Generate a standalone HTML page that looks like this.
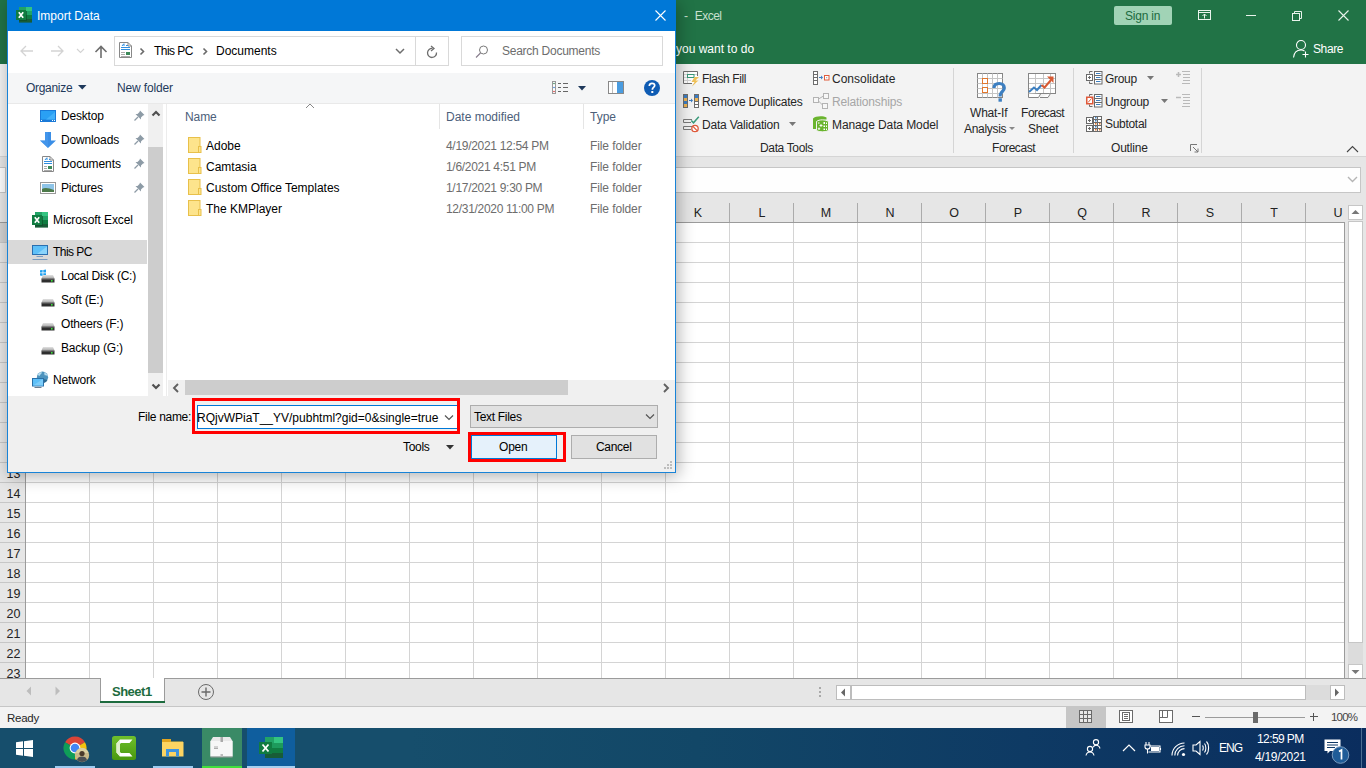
<!DOCTYPE html>
<html><head><meta charset="utf-8">
<style>
*{box-sizing:border-box;margin:0;padding:0}
html,body{width:1366px;height:768px;overflow:hidden;background:#fff;font-family:"Liberation Sans",sans-serif;font-size:12px;color:#000}
.a{position:absolute}
.t{position:absolute;white-space:nowrap;line-height:1}
svg.a{overflow:visible}
.rb{font-size:12px;color:#262626}
.dt{font-size:12px;color:#000}
.ch{position:absolute;top:206px;width:64px;padding-left:2px;text-align:center;font-size:12.5px;color:#222;line-height:14px}
.rh{position:absolute;left:1px;width:25px;text-align:center;font-size:12.5px;color:#222;line-height:22px;height:20px}
#titlebar{left:0;top:0;width:1366px;height:64px;background:#217346}
#ribbon{left:0;top:64px;width:1366px;height:93px;background:#f3f3f3;border-bottom:1px solid #d5d5d5}
#fstrip{left:0;top:157px;width:1366px;height:46px;background:#e6e6e6}
#fbox{left:300px;top:167px;width:1061px;height:26px;background:#fefefe;border:1px solid #c6c6c6}
#colhdr{left:0;top:193px;width:1345px;height:30px;background:#e6e6e6;border-bottom:1px solid #9b9b9b}
#grid{left:25px;top:223px;width:1320px;height:455px;background:#fff;
 background-image:linear-gradient(to right,#d4d4d4 1px,transparent 1px),linear-gradient(to bottom,#d4d4d4 1px,transparent 1px);
 background-size:64px 20px;background-position:0 19px;border-right:1px solid #9b9b9b}
#rowhdr{left:0;top:223px;width:26px;height:455px;background:#e6e6e6;border-right:1px solid #9b9b9b;
 background-image:linear-gradient(to bottom,#c6c6c6 1px,transparent 1px);background-size:20px 20px;background-position:0 19px}
#tabs{left:0;top:678px;width:1366px;height:29px;background:#e6e6e6;border-top:1px solid #9b9b9b;border-bottom:1px solid #c6c6c6}
#status{left:0;top:707px;width:1366px;height:21px;background:#f3f3f3}
#taskbar{left:0;top:728px;width:1366px;height:40px;background:linear-gradient(to right,#164e6c 0%,#164e6c 30%,#124767 51%,#0e3a64 75%,#0a2d5e 100%)}
</style></head><body>
<!-- ===== EXCEL TITLE ===== -->
<div id="titlebar" class="a"></div>
<div class="t" style="left:684px;top:10px;color:#c8e0d0;font-size:12px">-&nbsp;&nbsp;<span style="letter-spacing:-0.5px">Excel</span></div>
<div class="a" style="left:1114px;top:6px;width:58px;height:19px;background:#a1d3b6;border-radius:2px"></div>
<div class="t" style="left:1125px;top:10px;color:#1c6b3f;font-size:12px;letter-spacing:-0.2px">Sign in</div>
<svg class="a" style="left:1196px;top:8px" width="18" height="14" viewBox="0 0 18 14"><g fill="none" stroke="#e9f3ec" stroke-width="1"><rect x="2.5" y="2.5" width="12" height="9"/><line x1="2.5" y1="4.5" x2="14.5" y2="4.5"/><path d="M8.5 10.5V6M6.5 8L8.5 6L10.5 8"/></g></svg>
<div class="a" style="left:1246px;top:15px;width:10px;height:1px;background:#e9f3ec"></div>
<svg class="a" style="left:1290px;top:9px" width="14" height="13" viewBox="0 0 14 13"><g fill="none" stroke="#e9f3ec" stroke-width="1"><rect x="2.5" y="4.5" width="7" height="7"/><path d="M4.5 4.5V2.5H11.5V9.5H9.5"/></g></svg>
<svg class="a" style="left:1337px;top:9px" width="13" height="13" viewBox="0 0 13 13"><path d="M1.5 1.5L11.5 11.5M11.5 1.5L1.5 11.5" stroke="#e9f3ec" stroke-width="1.1"/></svg>
<div class="t" style="left:676px;top:43px;color:#fff;font-size:12px">you want to do</div>
<svg class="a" style="left:1292px;top:39px" width="18" height="19" viewBox="0 0 18 19"><g fill="none" stroke="#fff" stroke-width="1.1"><circle cx="9" cy="6" r="4.5"/><path d="M1.5 18.5C2 13.5 5 11 9 11C10.5 11 11.5 11.3 12.5 12"/><path d="M13.5 12.5V18.5M10.5 15.5H16.5"/></g></svg>
<div class="t" style="left:1313px;top:43px;color:#fff;font-size:12px;letter-spacing:-0.4px">Share</div>

<!-- ===== RIBBON ===== -->
<div id="ribbon" class="a"></div>
<div class="a" style="left:953px;top:68px;width:1px;height:85px;background:#d5d5d5"></div>
<div class="a" style="left:1073px;top:68px;width:1px;height:85px;background:#d5d5d5"></div>
<div class="a" style="left:1201px;top:68px;width:1px;height:85px;background:#d5d5d5"></div>

<!-- flash fill -->
<svg class="a" style="left:683px;top:71px" width="17" height="16" viewBox="0 0 17 16"><rect x="0.5" y="0.5" width="14" height="12" fill="#fff"/><path d="M1 3.5H14M1 6.5H4M1 9.5H8M4.5 1V12" stroke="#d6d6d6"/><path d="M14.5 5V0.5H0.5V12.5H9" fill="none" stroke="#6e6e6e"/><rect x="4.5" y="3.5" width="6.5" height="3" fill="#fff" stroke="#3a9a7a"/><path d="M16 6H11.5L8.5 11H11.5L9 15.5L15.5 9.5H12.5Z" fill="#efc15a"/></svg>
<div class="t rb" style="left:702px;top:73px;letter-spacing:-0.4px">Flash Fill</div>
<!-- remove dup -->
<svg class="a" style="left:683px;top:94px" width="16" height="14" viewBox="0 0 16 14"><rect x="0.5" y="0.5" width="4" height="13" fill="#fff" stroke="#6d6d6d"/><rect x="1" y="1" width="3" height="3" fill="#3b7dc4"/><rect x="1" y="4" width="3" height="3" fill="#efb454"/><rect x="1" y="7" width="3" height="3" fill="#3b7dc4"/><rect x="1" y="10" width="3" height="3" fill="#efb454"/><rect x="11.5" y="0.5" width="4" height="13" fill="#fff" stroke="#6d6d6d"/><rect x="12" y="1" width="3" height="3" fill="#3b7dc4"/><rect x="12" y="4" width="3" height="3" fill="#efb454"/><path d="M12 7.5H15M12 10.5H15" stroke="#6d6d6d"/><path d="M6 6.5H9" stroke="#3b7dc4"/><path d="M8 4.5L10 6.5L8 8.5Z" fill="#3b7dc4"/></svg>
<div class="t rb" style="left:702px;top:96px;letter-spacing:-0.2px">Remove Duplicates</div>
<!-- data validation -->
<svg class="a" style="left:683px;top:116px" width="17" height="16" viewBox="0 0 17 16"><path d="M9 3.5H0.5V6.5H8" fill="none" stroke="#7a7a7a"/><path d="M9 10.5H0.5V13.5H8" fill="none" stroke="#7a7a7a"/><path d="M8.3 4.5L10.5 6.8L15.8 0.8" fill="none" stroke="#3a9a7a" stroke-width="1.5"/><circle cx="12" cy="12.5" r="3.2" fill="#fff" stroke="#e0593a" stroke-width="1.3"/><path d="M9.9 10.4L14.1 14.6" stroke="#e0593a" stroke-width="1.3"/></svg>
<div class="t rb" style="left:702px;top:119px;letter-spacing:-0.2px">Data Validation</div>
<svg class="a" style="left:789px;top:122px" width="8" height="5"><path d="M0 0H7L3.5 4Z" fill="#777"/></svg>
<!-- consolidate -->
<svg class="a" style="left:813px;top:71px" width="17" height="14" viewBox="0 0 17 14"><rect x="0.5" y="0.5" width="4" height="13" fill="#fff" stroke="#6d6d6d"/><path d="M0.5 3.5H4.5M0.5 6.5H4.5M0.5 9.5H4.5" stroke="#6d6d6d"/><path d="M6 6.5H9" stroke="#3b7dc4"/><path d="M8 4.5L10 6.5L8 8.5Z" fill="#3b7dc4"/><rect x="11.5" y="4.5" width="4.5" height="4.5" fill="#fff" stroke="#e05a3a"/><rect x="13.2" y="6.2" width="1" height="1" fill="#888"/></svg>
<div class="t rb" style="left:832px;top:73px">Consolidate</div>
<!-- relationships -->
<svg class="a" style="left:813px;top:93px" width="17" height="16" viewBox="0 0 17 16"><g stroke="#b3b3b3" fill="#f7f7f7"><rect x="0.5" y="4.5" width="5" height="5"/><rect x="10.5" y="0.5" width="5" height="5"/><rect x="9.5" y="10.5" width="5" height="5"/><path d="M5.5 6L10.5 3M5.5 8L9.5 12" fill="none"/></g></svg>
<div class="t rb" style="left:832px;top:96px;color:#a6a6a6;letter-spacing:-0.15px">Relationships</div>
<!-- manage data model -->
<svg class="a" style="left:812px;top:115px" width="18" height="18" viewBox="0 0 18 18"><path d="M1 3.5C3 1 11 0.3 14.5 2.5V4.5L4.5 6V14H1Z" fill="#6ab42e"/><path d="M4.5 6.5C7 4.3 13.5 4.3 16.5 6.5V15.5C14 17.3 7 17.3 4.5 15.5Z" fill="#6ab42e" stroke="#f3f3f3" stroke-width="1"/><g fill="#fff"><rect x="11.5" y="7" width="1.5" height="2"/><rect x="14" y="7.5" width="1" height="1.5"/><rect x="11.5" y="10.5" width="1.5" height="1.5"/><rect x="14" y="10.5" width="1" height="1.5"/><rect x="11.5" y="13.5" width="1.5" height="1.5"/><rect x="14" y="13.5" width="1" height="1.5"/><rect x="6" y="7.5" width="1.5" height="1"/></g><path d="M9 9V12M7.5 10.5H10.5M7 12.5V15M5.8 13.75H8.2" stroke="#fff" stroke-width="0.9"/></svg>
<div class="t rb" style="left:832px;top:119px;letter-spacing:-0.1px">Manage Data Model</div>
<div class="t rb" style="left:760px;top:142px;letter-spacing:-0.35px">Data Tools</div>

<!-- what-if -->
<svg class="a" style="left:976px;top:72px" width="32" height="31" viewBox="0 0 32 31"><rect x="1.5" y="1.5" width="25" height="24" fill="#fff" stroke="#858585"/><g stroke="#c5c5c5"><path d="M6.5 1.5V25.5M11.5 1.5V25.5M16.5 1.5V25.5M21.5 1.5V25.5M1.5 6.5H26.5M1.5 11.5H26.5M1.5 16.5H26.5M1.5 21.5H26.5"/></g><rect x="6.5" y="6.5" width="5" height="5" fill="#fff" stroke="#e1772e"/><rect x="6.5" y="15.5" width="5" height="5" fill="#fff" stroke="#e1772e"/><path d="M18 16C18 12.5 20.5 11.5 23.2 11.5C26.3 11.5 28.3 13.3 28.3 16C28.3 19.3 24.6 19.5 24.2 23V24.5" fill="none" stroke="#3c7fc1" stroke-width="3.2"/><rect x="22.5" y="26.3" width="3.4" height="3.4" fill="#3c7fc1"/></svg>
<div class="t rb" style="left:970px;top:107px;letter-spacing:-0.2px">What-If</div>
<div class="t rb" style="left:964px;top:123px;letter-spacing:-0.3px">Analysis</div>
<svg class="a" style="left:1009px;top:127px" width="7" height="4"><path d="M0 0H6L3 3Z" fill="#888"/></svg>
<!-- forecast sheet -->
<svg class="a" style="left:1027px;top:72px" width="30" height="27" viewBox="0 0 30 27"><rect x="1.5" y="1.5" width="27" height="20" fill="#fff"/><g stroke="#c5c5c5"><path d="M8.5 1.5V21.5M16.5 1.5V21.5M23.5 1.5V21.5M1.5 6.5H28.5M1.5 11.5H28.5M1.5 16.5H28.5"/></g><rect x="1.5" y="1.5" width="27" height="20" fill="none" stroke="#858585"/><path d="M1.5 21.5V25.5H11.5L13.5 22M13 25.5H21L23.5 21.5" fill="#fff" stroke="#858585"/><path d="M2 20L7 15.5L10 18L14.5 13" fill="none" stroke="#3c7fc1" stroke-width="2"/><path d="M14.5 13L17.5 15.5L24 8" fill="none" stroke="#d85a33" stroke-width="2"/><path d="M20 4.5H26.5V11Z" fill="#d85a33"/></svg>
<div class="t rb" style="left:1021px;top:107px;letter-spacing:-0.45px">Forecast</div>
<div class="t rb" style="left:1028px;top:123px;letter-spacing:-0.2px">Sheet</div>
<div class="t rb" style="left:992px;top:142px;letter-spacing:-0.45px">Forecast</div>

<!-- group -->
<svg class="a" style="left:1086px;top:71px" width="17" height="14" viewBox="0 0 17 14"><rect x="8.5" y="0.5" width="7.5" height="12.5" fill="#fff" stroke="#6a6a6a"/><path d="M8.5 4.5H16M8.5 8.5H16" stroke="#6a6a6a"/><path d="M10 2.5H14.5M10 6.5H14.5M10 10.5H14.5" stroke="#3c7fc1"/><path d="M6.5 0.5H3.5V2.5M3.5 10.5V12.5H6.5" fill="none" stroke="#6a6a6a"/><rect x="0.5" y="3.5" width="6" height="6" fill="#fff" stroke="#6a6a6a"/><path d="M2 6.5H5M3.5 5V8" stroke="#6a6a6a"/></svg>
<div class="t rb" style="left:1105px;top:73px;letter-spacing:-0.3px">Group</div>
<svg class="a" style="left:1147px;top:76px" width="8" height="5"><path d="M0 0H7L3.5 4Z" fill="#777"/></svg>
<svg class="a" style="left:1176px;top:71px" width="15" height="14" viewBox="0 0 15 14"><g stroke="#b9b9b9"><path d="M0 3.5H5M2.5 1V6" stroke-width="1.5"/><path d="M6 0.5H14M7 3.5H14M7 6.5H14M7 9.5H14M6 12.5H14"/></g></svg>
<!-- ungroup -->
<svg class="a" style="left:1086px;top:94px" width="17" height="14" viewBox="0 0 17 14"><rect x="8.5" y="0.5" width="7.5" height="12.5" fill="#fff" stroke="#6a6a6a"/><path d="M8.5 4.5H16M8.5 8.5H16" stroke="#6a6a6a"/><path d="M10 2.5H14.5M10 6.5H14.5M10 10.5H14.5" stroke="#3c7fc1"/><path d="M6.5 0.5H3.5V2.5M3.5 10.5V12.5H6.5" fill="none" stroke="#6a6a6a"/><rect x="0.75" y="3.25" width="6" height="6.5" fill="#fff" stroke="#e0593a" stroke-width="1.5"/><path d="M2 8.5L5.5 4.5" stroke="#e0593a" stroke-width="1"/></svg>
<div class="t rb" style="left:1105px;top:96px;letter-spacing:-0.3px">Ungroup</div>
<svg class="a" style="left:1161px;top:99px" width="8" height="5"><path d="M0 0H7L3.5 4Z" fill="#777"/></svg>
<svg class="a" style="left:1176px;top:94px" width="15" height="14" viewBox="0 0 15 14"><g stroke="#b9b9b9"><path d="M0 3.5H5" stroke-width="1.5"/><path d="M6 0.5H14M7 3.5H14M7 6.5H14M7 9.5H14M6 12.5H14"/></g></svg>
<!-- subtotal -->
<svg class="a" style="left:1086px;top:116px" width="17" height="16" viewBox="0 0 17 16"><g fill="#fff" stroke="#6a6a6a"><rect x="0.5" y="1.5" width="6" height="6"/><rect x="0.5" y="9.5" width="6" height="6"/><rect x="7.5" y="0.5" width="8" height="15"/></g><path d="M2 4.5H5M3.5 3V6M2 12.5H5M3.5 11V14M11.5 0.5V15.5M7.5 3.5H15.5M7.5 6.5H15.5M7.5 9.5H15.5M7.5 12.5H15.5" stroke="#6a6a6a"/><g fill="#3c7fc1"><rect x="9" y="1" width="1.5" height="1.5"/><rect x="9" y="4" width="1.5" height="1.5"/><rect x="9" y="10" width="1.5" height="1.5"/></g><g fill="#e1772e"><rect x="9" y="7" width="1.5" height="1.5"/><rect x="13" y="7" width="1.5" height="1.5"/><rect x="9" y="13" width="1.5" height="1.5"/><rect x="13" y="13" width="1.5" height="1.5"/></g></svg>
<div class="t rb" style="left:1105px;top:118px;letter-spacing:-0.3px">Subtotal</div>
<div class="t rb" style="left:1111px;top:142px;letter-spacing:-0.2px">Outline</div>
<svg class="a" style="left:1190px;top:144px" width="9" height="9" viewBox="0 0 9 9"><g fill="none" stroke="#777"><path d="M0.5 7V0.5H7"/><path d="M3 3L8 8M8 4.5V8H4.5"/></g></svg>
<svg class="a" style="left:1346px;top:145px" width="13" height="8" viewBox="0 0 13 8"><path d="M1 7L6.5 1.5L12 7" fill="none" stroke="#444" stroke-width="1.1"/></svg>

<!-- ===== FORMULA BAR ===== -->
<div id="fstrip" class="a"></div>
<div id="fbox" class="a"></div>
<svg class="a" style="left:1347px;top:176px" width="11" height="7" viewBox="0 0 11 7"><path d="M1 1L5.5 5.5L10 1" fill="none" stroke="#b5b5b5" stroke-width="1.4"/></svg>

<!-- ===== HEADERS & GRID ===== -->
<div id="colhdr" class="a"></div>
<div id="grid" class="a"></div>
<div id="rowhdr" class="a"></div>
<div class="a" style="left:0;top:223px;width:25px;height:19px;background:#d2d2d2"></div>
<div class="a" style="left:-100px;top:167px;width:106px;height:26px;border:1px solid #c6c6c6;background:#fefefe"></div>
<div class="ch" style="left:25px">A</div>
<div class="ch" style="left:89px">B</div>
<div class="a" style="left:89px;top:203px;width:1px;height:19px;background:#ababab"></div>
<div class="ch" style="left:153px">C</div>
<div class="a" style="left:153px;top:203px;width:1px;height:19px;background:#ababab"></div>
<div class="ch" style="left:217px">D</div>
<div class="a" style="left:217px;top:203px;width:1px;height:19px;background:#ababab"></div>
<div class="ch" style="left:281px">E</div>
<div class="a" style="left:281px;top:203px;width:1px;height:19px;background:#ababab"></div>
<div class="ch" style="left:345px">F</div>
<div class="a" style="left:345px;top:203px;width:1px;height:19px;background:#ababab"></div>
<div class="ch" style="left:409px">G</div>
<div class="a" style="left:409px;top:203px;width:1px;height:19px;background:#ababab"></div>
<div class="ch" style="left:473px">H</div>
<div class="a" style="left:473px;top:203px;width:1px;height:19px;background:#ababab"></div>
<div class="ch" style="left:537px">I</div>
<div class="a" style="left:537px;top:203px;width:1px;height:19px;background:#ababab"></div>
<div class="ch" style="left:601px">J</div>
<div class="a" style="left:601px;top:203px;width:1px;height:19px;background:#ababab"></div>
<div class="ch" style="left:665px">K</div>
<div class="a" style="left:665px;top:203px;width:1px;height:19px;background:#ababab"></div>
<div class="ch" style="left:729px">L</div>
<div class="a" style="left:729px;top:203px;width:1px;height:19px;background:#ababab"></div>
<div class="ch" style="left:793px">M</div>
<div class="a" style="left:793px;top:203px;width:1px;height:19px;background:#ababab"></div>
<div class="ch" style="left:857px">N</div>
<div class="a" style="left:857px;top:203px;width:1px;height:19px;background:#ababab"></div>
<div class="ch" style="left:921px">O</div>
<div class="a" style="left:921px;top:203px;width:1px;height:19px;background:#ababab"></div>
<div class="ch" style="left:985px">P</div>
<div class="a" style="left:985px;top:203px;width:1px;height:19px;background:#ababab"></div>
<div class="ch" style="left:1049px">Q</div>
<div class="a" style="left:1049px;top:203px;width:1px;height:19px;background:#ababab"></div>
<div class="ch" style="left:1113px">R</div>
<div class="a" style="left:1113px;top:203px;width:1px;height:19px;background:#ababab"></div>
<div class="ch" style="left:1177px">S</div>
<div class="a" style="left:1177px;top:203px;width:1px;height:19px;background:#ababab"></div>
<div class="ch" style="left:1241px">T</div>
<div class="a" style="left:1241px;top:203px;width:1px;height:19px;background:#ababab"></div>
<div class="ch" style="left:1305px">U</div>
<div class="a" style="left:1305px;top:203px;width:1px;height:19px;background:#ababab"></div>
<div class="rh" style="top:223px">1</div>
<div class="rh" style="top:243px">2</div>
<div class="rh" style="top:263px">3</div>
<div class="rh" style="top:283px">4</div>
<div class="rh" style="top:303px">5</div>
<div class="rh" style="top:323px">6</div>
<div class="rh" style="top:343px">7</div>
<div class="rh" style="top:363px">8</div>
<div class="rh" style="top:383px">9</div>
<div class="rh" style="top:403px">10</div>
<div class="rh" style="top:423px">11</div>
<div class="rh" style="top:443px">12</div>
<div class="rh" style="top:463px">13</div>
<div class="rh" style="top:483px">14</div>
<div class="rh" style="top:503px">15</div>
<div class="rh" style="top:523px">16</div>
<div class="rh" style="top:543px">17</div>
<div class="rh" style="top:563px">18</div>
<div class="rh" style="top:583px">19</div>
<div class="rh" style="top:603px">20</div>
<div class="rh" style="top:623px">21</div>
<div class="rh" style="top:643px">22</div>
<div class="rh" style="top:663px">23</div>
<!-- vertical scrollbar -->
<div class="a" style="left:1345px;top:203px;width:21px;height:475px;background:#e6e6e6"></div>
<div class="a" style="left:1348px;top:205px;width:15px;height:15px;background:#fff;border:1px solid #c6c6c6"></div>
<svg class="a" style="left:1351px;top:209px" width="9" height="6"><path d="M0.5 5H8.5L4.5 1Z" fill="#777"/></svg>
<div class="a" style="left:1348px;top:221px;width:15px;height:422px;background:#fff;border:1px solid #c6c6c6"></div>
<div class="a" style="left:1348px;top:643px;width:15px;height:21px;background:#dcdcdc"></div>
<div class="a" style="left:1348px;top:664px;width:15px;height:15px;background:#fff;border:1px solid #c6c6c6"></div>
<svg class="a" style="left:1351px;top:669px" width="9" height="6"><path d="M0.5 1H8.5L4.5 5Z" fill="#777"/></svg>

<!-- ===== SHEET TABS ===== -->
<div id="tabs" class="a"></div>
<svg class="a" style="left:26px;top:686px" width="6" height="10"><path d="M5 0.5V9.5L0.5 5Z" fill="#bdbdbd"/></svg>
<svg class="a" style="left:55px;top:686px" width="6" height="10"><path d="M0.5 0.5V9.5L5 5Z" fill="#bdbdbd"/></svg>
<div class="a" style="left:100px;top:678px;width:65px;height:25px;background:#fff;border-left:1px solid #9b9b9b;border-right:1px solid #9b9b9b"></div>
<div class="a" style="left:100px;top:701px;width:65px;height:2px;background:#1d6b3e"></div>
<div class="t" style="left:112px;top:685px;font-weight:bold;color:#1d6b3e;font-size:13px;letter-spacing:-0.5px">Sheet1</div>
<svg class="a" style="left:197px;top:683px" width="18" height="18" viewBox="0 0 18 18"><circle cx="9" cy="9" r="7.5" fill="none" stroke="#6a6a6a" stroke-width="1"/><path d="M9 4.5V13.5M4.5 9H13.5" stroke="#6a6a6a" stroke-width="1.4"/></svg>
<div class="a" style="left:819px;top:687px;width:2px;height:2px;background:#a9a9a9"></div>
<div class="a" style="left:819px;top:691px;width:2px;height:2px;background:#a9a9a9"></div>
<div class="a" style="left:819px;top:695px;width:2px;height:2px;background:#a9a9a9"></div>
<div class="a" style="left:836px;top:685px;width:15px;height:15px;background:#fff;border:1px solid #bdbdbd"></div>
<svg class="a" style="left:840px;top:688px" width="6" height="9"><path d="M5 0.5V8.5L1 4.5Z" fill="#666"/></svg>
<div class="a" style="left:851px;top:685px;width:455px;height:15px;background:#fff;border:1px solid #bdbdbd"></div>
<div class="a" style="left:1306px;top:685px;width:24px;height:15px;background:#dcdcdc"></div>
<div class="a" style="left:1330px;top:685px;width:15px;height:15px;background:#fff;border:1px solid #bdbdbd"></div>
<svg class="a" style="left:1334px;top:688px" width="6" height="9"><path d="M1 0.5V8.5L5 4.5Z" fill="#666"/></svg>

<!-- ===== STATUS ===== -->
<div id="status" class="a"></div>
<div class="t" style="left:7px;top:713px;color:#262626;font-size:11.5px;letter-spacing:-0.25px">Ready</div>
<div class="a" style="left:1066px;top:707px;width:40px;height:21px;background:#c6c6c6"></div>
<svg class="a" style="left:1079px;top:710px" width="14" height="14" viewBox="0 0 14 14"><rect x="0.5" y="0.5" width="12" height="12" fill="#e8e8e8" stroke="#6a6a6a"/><path d="M4.5 0.5V12.5M8.5 0.5V12.5M0.5 4.5H12.5M0.5 8.5H12.5" stroke="#6a6a6a"/></svg>
<svg class="a" style="left:1119px;top:710px" width="15" height="14" viewBox="0 0 15 14"><rect x="0.5" y="0.5" width="13" height="12" fill="#fff" stroke="#6a6a6a"/><rect x="3.5" y="2.5" width="7" height="8" fill="#fff" stroke="#6a6a6a"/><path d="M5 4.5H9M5 6.5H9M5 8.5H9" stroke="#6a6a6a"/></svg>
<svg class="a" style="left:1159px;top:710px" width="15" height="14" viewBox="0 0 15 14"><rect x="0.5" y="0.5" width="13" height="12" fill="#fff" stroke="#6a6a6a"/><path d="M3.5 0.5V7.5M8.5 0.5V7.5H0.5" fill="none" stroke="#6a6a6a"/></svg>
<div class="a" style="left:1192px;top:716px;width:8px;height:1px;background:#555"></div>
<div class="a" style="left:1205px;top:717px;width:100px;height:1px;background:#9b9b9b"></div>
<div class="a" style="left:1253px;top:712px;width:5px;height:11px;background:#6a6a6a"></div>
<div class="a" style="left:1310px;top:716px;width:8px;height:1px;background:#555"></div>
<div class="a" style="left:1313px;top:713px;width:1px;height:8px;background:#555"></div>
<div class="t" style="left:1331px;top:712px;color:#444;font-size:11.5px;letter-spacing:-0.8px">100%</div>
<!-- ===== TASKBAR ===== -->
<div id="taskbar" class="a"></div>
<svg class="a" style="left:16px;top:740px" width="17" height="17" viewBox="0 0 17 17"><path d="M0 2.3L7 1.3V8H0ZM8 1.2L17 0V8H8ZM0 9H7V15.7L0 14.7ZM8 9H17V17L8 15.8Z" fill="#fff"/></svg>
<svg class="a" style="left:63px;top:736px" width="28" height="27" viewBox="0 0 28 27"><path d="M12 12L2.04 6.25A11.5 11.5 0 0 1 21.96 6.25Z" fill="#db4437"/><path d="M12 12L21.96 6.25A11.5 11.5 0 0 1 12 23.5Z" fill="#f4c20d"/><path d="M12 12L12 23.5A11.5 11.5 0 0 1 2.04 6.25Z" fill="#0f9d58"/><circle cx="12" cy="12" r="5.4" fill="#fff"/><circle cx="12" cy="12" r="4.3" fill="#4285f4"/><circle cx="19" cy="19" r="7.2" fill="#c9b98a"/><path d="M13 17C14 13 17 12 19 12C22 12 25 14 25.5 17" fill="#e8e0b0" opacity=".6"/><circle cx="19" cy="17.5" r="2.6" fill="#4a3a2c"/><path d="M14 24C14.5 21.5 16.5 20.5 19 20.5C21.5 20.5 23.5 21.5 24 24A7.2 7.2 0 0 1 14 24Z" fill="#4a4f55"/></svg>
<div class="a" style="left:55px;top:766px;width:40px;height:2px;background:#9ccbf0"></div>
<svg class="a" style="left:112px;top:736px" width="24" height="24" viewBox="0 0 24 24"><defs><linearGradient id="cg" x1="0" y1="0" x2="0" y2="1"><stop offset="0" stop-color="#6fbf2c"/><stop offset="1" stop-color="#48980e"/></linearGradient></defs><rect x="0" y="0" width="24" height="24" rx="2.5" fill="url(#cg)"/><path d="M20.5 3.5H8L4.5 7.5V16.5L8 20.5H20.5L17.5 17H9L8 16V8L9 7H17.5Z" fill="#fff"/><path d="M4.5 7.5L8 3.5V20.5L4.5 16.5Z" fill="#dff0cc"/></svg>
<svg class="a" style="left:162px;top:739px" width="22" height="18" viewBox="0 0 22 18"><path d="M0 1H8L9 2.5H21V17H0Z" fill="#f1c33b"/><rect x="0" y="0" width="9" height="3" fill="#e2a520"/><rect x="0" y="3" width="21.5" height="14.5" fill="#fcd462"/><path d="M4 17.5V10H17V17.5H14V13H7V17.5Z" fill="#3e94e0"/></svg>
<div class="a" style="left:153px;top:766px;width:40px;height:2px;background:#9ccbf0"></div>
<div class="a" style="left:202px;top:728px;width:40px;height:40px;background:#3a8a66"></div>
<div class="a" style="left:202px;top:766px;width:40px;height:2px;background:#43e03c"></div>
<svg class="a" style="left:210px;top:736px" width="23" height="22" viewBox="0 0 23 22"><path d="M3 1H20L22.5 5V20.5H0.5V5Z" fill="#e9e9e9"/><path d="M0.5 5H22.5V20.5H0.5Z" fill="#f7f7f7"/><path d="M0.5 20.5H22.5V21.5H0.5Z" fill="#9a9a9a"/><rect x="10.5" y="1" width="2.5" height="5" fill="#aaa"/><rect x="10.5" y="18" width="2.5" height="3" fill="#bbb"/><path d="M4 11H8M4 12.5H8" stroke="#999" stroke-width="0.8"/></svg>
<div class="a" style="left:247px;top:728px;width:48px;height:40px;background:#0f5e9e"></div>
<div class="a" style="left:247px;top:766px;width:48px;height:2px;background:#a6d0f0"></div>
<svg class="a" style="left:259px;top:737px" width="25" height="22" viewBox="0 0 25 22"><rect x="6" y="0" width="18" height="21" fill="#21a366"/><rect x="15" y="0" width="9" height="6" fill="#33c481"/><rect x="6" y="6" width="18" height="8" fill="#1d9a5c"/><rect x="6" y="11" width="18" height="10" fill="#185c37"/><rect x="6" y="11" width="18" height="5" fill="#107c41"/><rect x="0" y="5" width="13" height="12" fill="#107c41"/><path d="M3.5 7.5L9.5 14.5M9.5 7.5L3.5 14.5" stroke="#fff" stroke-width="1.8"/></svg>
<div class="a" style="left:247px;top:766px;width:48px;height:2px;background:#a6d0f0"></div>

<!-- tray -->
<svg class="a" style="left:1085px;top:739px" width="17" height="18" viewBox="0 0 17 18"><g fill="none" stroke="#fff" stroke-width="1.1"><circle cx="11" cy="3.2" r="2.6"/><path d="M8.2 8.2C8.8 6.8 9.8 6.2 11 6.2C13 6.2 14.5 7.5 15 9.5"/><circle cx="5" cy="10" r="2.6"/><path d="M1 16.5C1.5 14 3 13 5 13C7 13 8.5 14 9 16.5"/></g></svg>
<svg class="a" style="left:1122px;top:744px" width="14" height="8" viewBox="0 0 14 8"><path d="M1 7L7 1L13 7" fill="none" stroke="#fff" stroke-width="1.2"/></svg>
<svg class="a" style="left:1144px;top:741px" width="18" height="13" viewBox="0 0 18 13"><g fill="none" stroke="#fff" stroke-width="1.1"><path d="M2 1V4M5 1V4M1 4H6V6C6 7.5 5 8 3.5 8C2 8 1 7.5 1 6Z"/><path d="M3.5 8V12.5"/><path d="M6 5H16V11H4.5"/><path d="M16.5 7V9"/></g><rect x="7" y="6" width="8" height="4" fill="#fff"/></svg>
<svg class="a" style="left:1171px;top:742px" width="15" height="14" viewBox="0 0 15 14"><g fill="none" stroke="#fff" stroke-width="1.1"><path d="M1 13.5A12.5 12.5 0 0 1 13.5 1"/><path d="M3.8 13.5A9.7 9.7 0 0 1 13.5 3.8"/><path d="M6.6 13.5A6.9 6.9 0 0 1 13.5 6.6"/></g><circle cx="12.5" cy="12.5" r="1.6" fill="#fff"/></svg>
<svg class="a" style="left:1192px;top:740px" width="18" height="16" viewBox="0 0 18 16"><g fill="none" stroke="#fff" stroke-width="1.1"><path d="M1 5H4L8 1.5V14.5L4 11H1Z"/><path d="M10.5 5.5C11.5 6.5 11.5 9.5 10.5 10.5"/><path d="M12.5 3.5C14.3 5.5 14.3 10.5 12.5 12.5"/><path d="M14.5 1.5C17.3 4.5 17.3 11.5 14.5 14.5"/></g></svg>
<div class="t" style="left:1219px;top:742px;color:#fff;font-size:12px;letter-spacing:-0.9px">ENG</div>
<div class="t" style="left:1257px;top:733px;color:#fff;font-size:12px;letter-spacing:-0.6px">12:59 PM</div>
<div class="t" style="left:1255px;top:751px;color:#fff;font-size:12px;letter-spacing:-0.3px">4/19/2021</div>
<svg class="a" style="left:1324px;top:739px" width="26" height="26" viewBox="0 0 26 26"><path d="M0.5 0.5H16.5V12H6L3.5 14.5V12H0.5Z" fill="#fff"/><path d="M3 3.5H14M3 6H14M3 8.5H11" stroke="#123a66" stroke-width="1"/><circle cx="16.5" cy="16" r="8.3" fill="#1f5c98" stroke="#7a9cc0" stroke-width="1"/><path d="M15 12.5L17.5 11V20.5" fill="none" stroke="#fff" stroke-width="1.7"/></svg>
<div class="a" style="left:1361px;top:728px;width:1px;height:40px;background:#4a6e92"></div>
<!-- ===== DIALOG ===== -->
<div class="a" style="left:7px;top:0;width:669px;height:473px;box-shadow:2px 3px 16px rgba(0,0,0,.32)"></div>
<div class="a" style="left:7px;top:0;width:669px;height:473px;background:#fff;border:1px solid #1883d7;border-top:0"></div>
<div class="a" style="left:7px;top:0;width:669px;height:31px;background:#0078d7"></div>
<svg class="a" style="left:16px;top:7px" width="17" height="16" viewBox="0 0 17 16"><rect x="3" y="0" width="13" height="4" fill="#21a366"/><rect x="10" y="0" width="6" height="4" fill="#33c481"/><rect x="3" y="4" width="13" height="4" fill="#21a366"/><rect x="3" y="8" width="13" height="4" fill="#107c41"/><rect x="3" y="12" width="13" height="3.6" fill="#185c37"/><rect x="0" y="3" width="10" height="10" fill="#107c41"/><path d="M10 4V13H3V14H11V4Z" fill="#0b4a26" opacity=".6"/><path d="M2.8 5.2L7.2 10.8M7.2 5.2L2.8 10.8" stroke="#fff" stroke-width="1.7"/></svg>
<div class="t" style="left:37px;top:10px;color:#fff;font-size:12px">Import Data</div>
<svg class="a" style="left:655px;top:10px" width="11" height="11" viewBox="0 0 11 11"><path d="M0.5 0.5L10.5 10.5M10.5 0.5L0.5 10.5" stroke="#fff" stroke-width="1.1"/></svg>

<!-- nav -->
<svg class="a" style="left:20px;top:45px" width="14" height="12" viewBox="0 0 14 12"><path d="M1 6H13M6 1L1 6L6 11" fill="none" stroke="#d3d3d3" stroke-width="1.3"/></svg>
<svg class="a" style="left:50px;top:45px" width="14" height="12" viewBox="0 0 14 12"><path d="M1 6H13M8 1L13 6L8 11" fill="none" stroke="#d3d3d3" stroke-width="1.3"/></svg>
<svg class="a" style="left:76px;top:48px" width="9" height="6" viewBox="0 0 9 6"><path d="M1 1L4.5 4.5L8 1" fill="none" stroke="#d3d3d3" stroke-width="1.1"/></svg>
<svg class="a" style="left:94px;top:45px" width="14" height="14" viewBox="0 0 14 14"><path d="M7 13V1.5M1.5 7L7 1.5L12.5 7" fill="none" stroke="#6e6e6e" stroke-width="1.6"/></svg>
<div class="a" style="left:114px;top:36px;width:335px;height:30px;border:1px solid #d9d9d9;background:#fff"></div>
<div class="a" style="left:415px;top:37px;width:1px;height:28px;background:#d9d9d9"></div>
<svg class="a" style="left:119px;top:42px" width="13" height="16" viewBox="0 0 13 16"><path d="M0.5 0.5H9L12.5 4V15.5H0.5Z" fill="#fff" stroke="#888"/><path d="M9 0.5V4H12.5" fill="none" stroke="#888"/><path d="M2 5.5H11M2 7.5H11" stroke="#2f8ee0"/><path d="M3 4L5 1.5M4 3H6M7 3.5H9" stroke="#2f8ee0"/><path d="M2 10.5H6M2 12.5H6M2 14.5H11" stroke="#aaa"/><rect x="7" y="10" width="4" height="3" fill="#3d8a5a"/></svg>
<svg class="a" style="left:139px;top:47px" width="6" height="9" viewBox="0 0 6 9"><path d="M1.5 1.5L4.5 4.5L1.5 7.5" fill="none" stroke="#6a6a6a" stroke-width="1.6"/></svg>
<div class="t dt" style="left:154px;top:45px;letter-spacing:-0.55px">This PC</div>
<svg class="a" style="left:202px;top:47px" width="6" height="9" viewBox="0 0 6 9"><path d="M1.5 1.5L4.5 4.5L1.5 7.5" fill="none" stroke="#6a6a6a" stroke-width="1.6"/></svg>
<div class="t dt" style="left:216px;top:45px">Documents</div>
<svg class="a" style="left:395px;top:48px" width="10" height="7" viewBox="0 0 10 7"><path d="M1 1L5 5L9 1" fill="none" stroke="#6e6e6e" stroke-width="1.5"/></svg>
<svg class="a" style="left:426px;top:45px" width="13" height="14" viewBox="0 0 13 14"><path d="M10.5 7.5A4.5 4.5 0 1 1 6.5 3.5" fill="none" stroke="#6e6e6e" stroke-width="1.3"/><path d="M5 1L8 3.5L5 6" fill="none" stroke="#6e6e6e" stroke-width="1.3"/></svg>
<div class="a" style="left:461px;top:36px;width:202px;height:30px;border:1px solid #d9d9d9;background:#fff"></div>
<svg class="a" style="left:475px;top:45px" width="14" height="13" viewBox="0 0 14 13"><circle cx="8.5" cy="5" r="4" fill="none" stroke="#7a7a7a" stroke-width="1"/><path d="M5.5 8L1 12.5" stroke="#857a8a" stroke-width="1.1"/></svg>
<div class="t dt" style="left:502px;top:45px;color:#6d6d6d;letter-spacing:-0.25px">Search Documents</div>

<!-- toolbar -->
<div class="a" style="left:8px;top:73px;width:667px;height:31px;background:#f5f6f7;border-bottom:1px solid #e9e9e9"></div>
<div class="t dt" style="left:26px;top:82px;color:#1e395b;letter-spacing:-0.3px">Organize</div>
<svg class="a" style="left:78px;top:85px" width="9" height="5"><path d="M0 0H8.5L4.25 4.5Z" fill="#1e395b"/></svg>
<div class="t dt" style="left:117px;top:82px;color:#1e395b;letter-spacing:-0.15px">New folder</div>
<svg class="a" style="left:552px;top:81px" width="18" height="13" viewBox="0 0 18 13"><rect x="0.5" y="0.5" width="3" height="12" fill="#fff" stroke="#999"/><circle cx="2" cy="2.5" r="0.8" fill="#3a8a5a"/><circle cx="2" cy="6.5" r="0.8" fill="#3a7dd0"/><circle cx="2" cy="10.5" r="0.8" fill="#d83a3a"/><path d="M6 2.5H9M11 2.5H16M6 6.5H9M11 6.5H16M6 10.5H9M11 10.5H16" stroke="#666" stroke-width="1"/></svg>
<svg class="a" style="left:578px;top:86px" width="9" height="5"><path d="M0 0H8L4 4.5Z" fill="#1e395b"/></svg>
<svg class="a" style="left:608px;top:81px" width="17" height="13" viewBox="0 0 17 13"><rect x="0.5" y="0.5" width="15" height="12" fill="#fff" stroke="#888"/><path d="M4.5 1V12" stroke="#bbb"/><rect x="9" y="1" width="6" height="11" fill="#4a9ce0"/></svg>
<svg class="a" style="left:643px;top:79px" width="18" height="18" viewBox="0 0 18 18"><circle cx="9" cy="9" r="8" fill="#0f5cb4"/><path d="M6.3 7C6.3 5.2 7.5 4.3 9 4.3C10.6 4.3 11.7 5.2 11.7 6.6C11.7 8.3 9.4 8.6 9.4 10.3V10.8" fill="none" stroke="#fff" stroke-width="1.7"/><rect x="8.3" y="12" width="2" height="2" fill="#fff"/></svg>

<!-- nav pane -->
<div class="a" style="left:8px;top:240px;width:139px;height:24px;background:#d9d9d9"></div>
<svg class="a" style="left:40px;top:110px" width="16" height="12" viewBox="0 0 16 12"><rect x="0" y="0" width="16" height="12" fill="#1a7ad8"/><rect x="1" y="1" width="14" height="8.5" fill="#2aa0f4"/><path d="M6 9.5L15 2V9.5Z" fill="#43b1fa"/><rect x="1" y="10" width="1" height="1" fill="#fff"/><rect x="12" y="10" width="1" height="1" fill="#fff"/><rect x="14" y="10" width="1" height="1" fill="#fff"/></svg>
<div class="t dt" style="left:61px;top:110px;letter-spacing:-0.2px">Desktop</div>
<svg class="a" style="left:40px;top:132px" width="16" height="16" viewBox="0 0 16 16"><path d="M5 0H11V8.5H16L8 16L0 8.5H5Z" fill="#3a8ee6"/><path d="M5 0H8V16L0 8.5H5Z" fill="#4a9cf0" opacity=".5"/></svg>
<div class="t dt" style="left:61px;top:134px;letter-spacing:-0.15px">Downloads</div>
<svg class="a" style="left:42px;top:156px" width="12" height="16" viewBox="0 0 12 16"><path d="M0.5 0.5H8L11.5 4V15.5H0.5Z" fill="#fff" stroke="#888"/><path d="M8 0.5V4H11.5" fill="none" stroke="#888"/><path d="M2 5.5H10M2 7.5H10" stroke="#2f8ee0"/><path d="M3 4L5 1.5M4 3H6M7 3.5H8" stroke="#2f8ee0"/><path d="M2 10.5H5M2 12.5H5M2 14.5H10" stroke="#aaa"/><rect x="6" y="10" width="4" height="3" fill="#3d8a5a"/></svg>
<div class="t dt" style="left:61px;top:158px;letter-spacing:-0.1px">Documents</div>
<svg class="a" style="left:40px;top:182px" width="16" height="12" viewBox="0 0 16 12"><rect x="0.5" y="0.5" width="15" height="11" fill="#fff" stroke="#999"/><rect x="2" y="2" width="12" height="8" fill="#8ec4e8"/><path d="M2 7C5 5 9 6 14 8V10H2Z" fill="#4d7a4a"/></svg>
<div class="t dt" style="left:61px;top:182px;letter-spacing:-0.2px">Pictures</div>
<svg class="a pin" style="left:134px;top:110px" width="11" height="11" viewBox="0 0 11 11"><path d="M6 0.5L10.5 5L9 5.5L7 7.5L7 9.5L1.5 4L3.5 4L5.5 2Z" fill="#8d9ba6"/><path d="M4 7L0.5 10.5" stroke="#8d9ba6" stroke-width="1.3"/></svg>
<svg class="a pin" style="left:134px;top:134px" width="11" height="11" viewBox="0 0 11 11"><path d="M6 0.5L10.5 5L9 5.5L7 7.5L7 9.5L1.5 4L3.5 4L5.5 2Z" fill="#8d9ba6"/><path d="M4 7L0.5 10.5" stroke="#8d9ba6" stroke-width="1.3"/></svg>
<svg class="a pin" style="left:134px;top:158px" width="11" height="11" viewBox="0 0 11 11"><path d="M6 0.5L10.5 5L9 5.5L7 7.5L7 9.5L1.5 4L3.5 4L5.5 2Z" fill="#8d9ba6"/><path d="M4 7L0.5 10.5" stroke="#8d9ba6" stroke-width="1.3"/></svg>
<svg class="a pin" style="left:134px;top:182px" width="11" height="11" viewBox="0 0 11 11"><path d="M6 0.5L10.5 5L9 5.5L7 7.5L7 9.5L1.5 4L3.5 4L5.5 2Z" fill="#8d9ba6"/><path d="M4 7L0.5 10.5" stroke="#8d9ba6" stroke-width="1.3"/></svg>
<svg class="a" style="left:32px;top:212px" width="17" height="16" viewBox="0 0 17 16"><rect x="3" y="0" width="13" height="4" fill="#21a366"/><rect x="10" y="0" width="6" height="4" fill="#33c481"/><rect x="3" y="4" width="13" height="4" fill="#21a366"/><rect x="3" y="8" width="13" height="4" fill="#107c41"/><rect x="3" y="12" width="13" height="3.6" fill="#185c37"/><rect x="0" y="3" width="10" height="10" fill="#107c41"/><path d="M10 4V13H3V14H11V4Z" fill="#0b4a26" opacity=".6"/><path d="M2.8 5.2L7.2 10.8M7.2 5.2L2.8 10.8" stroke="#fff" stroke-width="1.7"/></svg>
<div class="t dt" style="left:53px;top:214px;letter-spacing:-0.1px">Microsoft Excel</div>
<svg class="a" style="left:32px;top:245px" width="17" height="16" viewBox="0 0 17 16"><rect x="0.5" y="0.5" width="15" height="9" fill="#5ec0f8" stroke="#2a6fb0"/><path d="M5 9L15 1.5V9Z" fill="#8ad4fb"/><path d="M4.5 11.5H11" stroke="#7a9cc0"/><path d="M0.5 14.5H15.5" stroke="#7a9cc0"/></svg>
<div class="t dt" style="left:53px;top:246px;letter-spacing:-0.55px">This PC</div>
<svg class="a" style="left:39px;top:269px" width="8" height="8" viewBox="0 0 8 8"><path d="M1 1.3L3.6 1V3.6H1ZM4.3 0.9L7 0.5V3.6H4.3ZM1 4.3H3.6V6.9L1 6.6ZM4.3 4.3H7V7.4L4.3 7Z" fill="#1ea0f0"/></svg><svg class="a drv" style="left:41px;top:275px" width="14" height="8" viewBox="0 0 14 8"><defs><linearGradient id="dg275" x1="0" y1="0" x2="0" y2="1"><stop offset="0" stop-color="#e2e2e2"/><stop offset="1" stop-color="#a8a8a8"/></linearGradient></defs><path d="M2 0H12L13.5 3.5H0.5Z" fill="url(#dg275)"/><rect x="0.5" y="3.5" width="13" height="4" fill="#2e2e2e"/><rect x="1" y="4" width="12" height="1" fill="#505050"/><rect x="10" y="5" width="1.6" height="1.6" fill="#3ade3a"/></svg>
<div class="t dt" style="left:61px;top:270px;letter-spacing:-0.25px">Local Disk (C:)</div>
<svg class="a drv" style="left:41px;top:299px" width="14" height="8" viewBox="0 0 14 8"><defs><linearGradient id="dg299" x1="0" y1="0" x2="0" y2="1"><stop offset="0" stop-color="#e2e2e2"/><stop offset="1" stop-color="#a8a8a8"/></linearGradient></defs><path d="M2 0H12L13.5 3.5H0.5Z" fill="url(#dg299)"/><rect x="0.5" y="3.5" width="13" height="4" fill="#2e2e2e"/><rect x="1" y="4" width="12" height="1" fill="#505050"/><rect x="10" y="5" width="1.6" height="1.6" fill="#3ade3a"/></svg>
<div class="t dt" style="left:61px;top:294px;letter-spacing:-0.2px">Soft (E:)</div>
<svg class="a drv" style="left:41px;top:323px" width="14" height="8" viewBox="0 0 14 8"><defs><linearGradient id="dg323" x1="0" y1="0" x2="0" y2="1"><stop offset="0" stop-color="#e2e2e2"/><stop offset="1" stop-color="#a8a8a8"/></linearGradient></defs><path d="M2 0H12L13.5 3.5H0.5Z" fill="url(#dg323)"/><rect x="0.5" y="3.5" width="13" height="4" fill="#2e2e2e"/><rect x="1" y="4" width="12" height="1" fill="#505050"/><rect x="10" y="5" width="1.6" height="1.6" fill="#3ade3a"/></svg>
<div class="t dt" style="left:61px;top:318px;letter-spacing:-0.2px">Otheers (F:)</div>
<svg class="a drv" style="left:41px;top:347px" width="14" height="8" viewBox="0 0 14 8"><defs><linearGradient id="dg347" x1="0" y1="0" x2="0" y2="1"><stop offset="0" stop-color="#e2e2e2"/><stop offset="1" stop-color="#a8a8a8"/></linearGradient></defs><path d="M2 0H12L13.5 3.5H0.5Z" fill="url(#dg347)"/><rect x="0.5" y="3.5" width="13" height="4" fill="#2e2e2e"/><rect x="1" y="4" width="12" height="1" fill="#505050"/><rect x="10" y="5" width="1.6" height="1.6" fill="#3ade3a"/></svg>
<div class="t dt" style="left:61px;top:342px;letter-spacing:-0.2px">Backup (G:)</div>
<svg class="a" style="left:32px;top:371px" width="17" height="18" viewBox="0 0 17 18"><circle cx="10.5" cy="6.2" r="5.6" fill="#4d93bd"/><path d="M6 3C7 1.5 9 1 10 1.5C9.5 3 8 3.5 7.5 5C6.5 5 6 4 6 3ZM12 1.2C14 1.8 15.5 3.5 16 5.5C15 5 14 4 13 4.5C12 3.5 12.5 2 12 1.2Z" fill="#b6dcef"/><path d="M15.5 9C14.5 11 12.5 12 11 12V8Z" fill="#2e6a90"/><rect x="0.5" y="7.5" width="11" height="7.5" fill="#5ec0f8" stroke="#2a70a8"/><path d="M1 14.5L11 8V14.5Z" fill="#7dcdfa"/><path d="M5 16H7" stroke="#9ab"/><path d="M2.5 16.5H9.5" stroke="#6a7e92"/></svg>
<div class="t dt" style="left:53px;top:374px;letter-spacing:-0.2px">Network</div>
<!-- nav scrollbar -->
<div class="a" style="left:148px;top:104px;width:15px;height:292px;background:#f0f0f0"></div>
<div class="a" style="left:148px;top:147px;width:15px;height:226px;background:#cdcdcd"></div>
<svg class="a" style="left:151px;top:109px" width="10" height="8" viewBox="0 0 10 8"><path d="M1.5 6.5L5 3L8.5 6.5" fill="none" stroke="#505050" stroke-width="2.2"/></svg>
<svg class="a" style="left:151px;top:383px" width="10" height="8" viewBox="0 0 10 8"><path d="M1.5 1.5L5 5L8.5 1.5" fill="none" stroke="#505050" stroke-width="2.2"/></svg>
<div class="a" style="left:166px;top:104px;width:1px;height:292px;background:#ececec"></div>

<!-- file list -->
<svg class="a" style="left:305px;top:103px" width="10" height="6" viewBox="0 0 10 6"><path d="M1 5L5 1L9 5" fill="none" stroke="#888" stroke-width="1"/></svg>
<div class="t dt" style="left:185px;top:111px;color:#4c607a;letter-spacing:-0.1px">Name</div>
<div class="a" style="left:439px;top:104px;width:1px;height:25px;background:#e5e5e5"></div>
<div class="t dt" style="left:446px;top:111px;color:#4c607a">Date modified</div>
<div class="a" style="left:583px;top:104px;width:1px;height:25px;background:#e5e5e5"></div>
<div class="t dt" style="left:590px;top:111px;color:#4c607a">Type</div>
<svg class="a" style="left:188px;top:137px" width="14" height="16" viewBox="0 0 14 16"><rect x="0.5" y="0.5" width="11.5" height="15" fill="#fde48c" stroke="#e8c04a"/><rect x="10.5" y="9.5" width="2.5" height="6" fill="#fde48c" stroke="#e8c04a"/></svg>
<div class="t dt" style="left:206px;top:140px">Adobe</div>
<div class="t dt" style="left:446px;top:140px;color:#6d6d6d;letter-spacing:-0.3px">4/19/2021 12:54 PM</div>
<div class="t dt" style="left:590px;top:140px;color:#6d6d6d;letter-spacing:-0.1px">File folder</div>
<svg class="a" style="left:188px;top:158px" width="14" height="16" viewBox="0 0 14 16"><rect x="0.5" y="0.5" width="11.5" height="15" fill="#fde48c" stroke="#e8c04a"/><rect x="10.5" y="9.5" width="2.5" height="6" fill="#fde48c" stroke="#e8c04a"/></svg>
<div class="t dt" style="left:206px;top:161px">Camtasia</div>
<div class="t dt" style="left:446px;top:161px;color:#6d6d6d;letter-spacing:-0.3px">1/6/2021 4:51 PM</div>
<div class="t dt" style="left:590px;top:161px;color:#6d6d6d;letter-spacing:-0.1px">File folder</div>
<svg class="a" style="left:188px;top:179px" width="14" height="16" viewBox="0 0 14 16"><rect x="0.5" y="0.5" width="11.5" height="15" fill="#fde48c" stroke="#e8c04a"/><rect x="10.5" y="9.5" width="2.5" height="6" fill="#fde48c" stroke="#e8c04a"/></svg>
<div class="t dt" style="left:206px;top:182px">Custom Office Templates</div>
<div class="t dt" style="left:446px;top:182px;color:#6d6d6d;letter-spacing:-0.3px">1/17/2021 9:30 PM</div>
<div class="t dt" style="left:590px;top:182px;color:#6d6d6d;letter-spacing:-0.1px">File folder</div>
<svg class="a" style="left:188px;top:200px" width="14" height="16" viewBox="0 0 14 16"><rect x="0.5" y="0.5" width="11.5" height="15" fill="#fde48c" stroke="#e8c04a"/><rect x="10.5" y="9.5" width="2.5" height="6" fill="#fde48c" stroke="#e8c04a"/></svg>
<div class="t dt" style="left:206px;top:203px">The KMPlayer</div>
<div class="t dt" style="left:446px;top:203px;color:#6d6d6d;letter-spacing:-0.3px">12/31/2020 11:00 PM</div>
<div class="t dt" style="left:590px;top:203px;color:#6d6d6d;letter-spacing:-0.1px">File folder</div>

<!-- h scrollbar -->
<div class="a" style="left:168px;top:380px;width:507px;height:16px;background:#f0f0f0"></div>
<div class="a" style="left:185px;top:380px;width:383px;height:15px;background:#cdcdcd"></div>
<svg class="a" style="left:173px;top:383px" width="6" height="10" viewBox="0 0 6 10"><path d="M5 1L1 5L5 9" fill="none" stroke="#606060" stroke-width="1.9"/></svg>
<svg class="a" style="left:663px;top:383px" width="6" height="10" viewBox="0 0 6 10"><path d="M1 1L5 5L1 9" fill="none" stroke="#606060" stroke-width="1.9"/></svg>

<!-- bottom -->
<div class="a" style="left:8px;top:396px;width:667px;height:76px;background:#f0f0f0"></div>
<div class="t dt" style="left:138px;top:411px;letter-spacing:-0.3px">File name:</div>
<div class="a" style="left:192px;top:398px;width:268px;height:36px;border:3px solid #ff0000"></div>
<div class="a" style="left:197px;top:405px;width:260px;height:24px;background:#fff;border:1px solid #0078d7;border-right:0"></div>
<div class="a" style="left:197px;top:406px;width:258px;height:22px;overflow:hidden"><div class="t dt" style="left:0px;top:6px">RQjvWPiaT__YV/pubhtml?gid=0&amp;single=true</div></div>
<svg class="a" style="left:444px;top:414px" width="10" height="7" viewBox="0 0 10 7"><path d="M1 1.5L5 5.5L9 1.5" fill="none" stroke="#555" stroke-width="1.2"/></svg>
<div class="a" style="left:470px;top:405px;width:188px;height:23px;background:#e1e1e1;border:1px solid #adadad"></div>
<div class="t dt" style="left:474px;top:411px;letter-spacing:-0.3px">Text Files</div>
<svg class="a" style="left:645px;top:413px" width="10" height="7" viewBox="0 0 10 7"><path d="M1 1.5L5 5.5L9 1.5" fill="none" stroke="#555" stroke-width="1.2"/></svg>
<div class="t dt" style="left:403px;top:441px;letter-spacing:-0.3px">Tools</div>
<svg class="a" style="left:446px;top:445px" width="9" height="5"><path d="M0 0H8L4 4.5Z" fill="#333"/></svg>
<div class="a" style="left:468px;top:432px;width:98px;height:30px;border:3px solid #ff0000"></div>
<div class="a" style="left:471px;top:435px;width:86px;height:24px;background:#e5f1fb;border:1px solid #0078d7"></div>
<div class="t dt" style="left:499px;top:441px;letter-spacing:-0.2px">Open</div>
<div class="a" style="left:571px;top:435px;width:86px;height:24px;background:#e1e1e1;border:1px solid #adadad"></div>
<div class="t dt" style="left:596px;top:441px;letter-spacing:-0.3px">Cancel</div>
<svg class="a" style="left:663px;top:460px" width="10" height="10" viewBox="0 0 10 10"><g fill="#bdbdbd"><rect x="7" y="1" width="2" height="2"/><rect x="4" y="4" width="2" height="2"/><rect x="7" y="4" width="2" height="2"/><rect x="1" y="7" width="2" height="2"/><rect x="4" y="7" width="2" height="2"/><rect x="7" y="7" width="2" height="2"/></g></svg>

</body></html>
